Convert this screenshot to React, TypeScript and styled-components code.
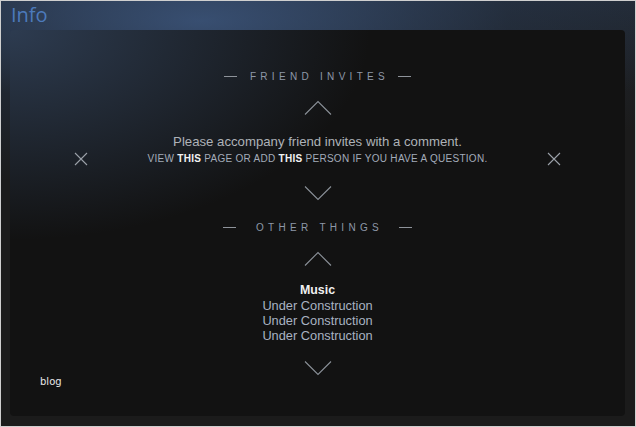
import React from "react";
import styled, { createGlobalStyle } from "styled-components";

const Global = createGlobalStyle`
  html, body { margin: 0; padding: 0; background: #1a1a1a; }
  * { box-sizing: border-box; }
`;

const Frame = styled.div`
  width: 636px;
  height: 427px;
  border: 1px solid #cfcfcf;
  background:
    radial-gradient(ellipse 560px 170px at 200px 20px, rgba(64, 92, 135, 0.75), rgba(40, 55, 78, 0.4) 55%, rgba(26, 26, 26, 0) 100%),
    linear-gradient(180deg, #222a35 0px, #1b1b1b 90px);
  display: flex;
  flex-direction: column;
  overflow: hidden;
`;

const Title = styled.h1`
  margin: 0;
  height: 29px;
  padding: 0 0 0 10px;
  font-family: "Open Sans", "Liberation Sans", sans-serif;
  font-weight: 400;
  font-size: 20px;
  line-height: 28px;
  color: #4c7abb;
`;

const Panel = styled.div`
  margin: 0 10px 0 9px;
  height: 386px;
  border-radius: 4px;
  background:
    radial-gradient(ellipse 360px 210px at 0px 0px, rgba(52, 70, 96, 0.8), rgba(18, 18, 18, 0) 100%),
    #121212;
  display: flex;
  flex-direction: column;
  align-items: center;
  padding-top: 39px;
`;

const SectionHeader = styled.div<{ $gap: number; $mt?: number }>`
  display: flex;
  align-items: center;
  gap: ${(p) => p.$gap}px;
  height: 14px;
  margin-top: ${(p) => p.$mt ?? 0}px;
  font-family: "Liberation Sans", Arial, sans-serif;
  font-size: 10px;
  letter-spacing: 4.3px;
  color: #8e98a8;
  text-transform: uppercase;
`;

const Dash = styled.span`
  width: 13px;
  height: 1px;
  background: #8e939a;
`;

const HeaderText = styled.span`
  margin-right: -4px;
`;

const Chevron = styled.svg<{ $mt: number }>`
  display: block;
  margin-top: ${(p) => p.$mt}px;
  flex: none;
`;

const InviteRow = styled.div`
  align-self: stretch;
  display: flex;
  align-items: flex-end;
  justify-content: space-between;
  padding: 0 64px;
  margin-top: 18px;
`;

const Close = styled.svg`
  display: block;
  margin-bottom: 0px;
`;

const InviteText = styled.div`
  display: flex;
  flex-direction: column;
  align-items: center;
  font-family: "Liberation Sans", Arial, sans-serif;
`;

const Lead = styled.div`
  font-size: 13.2px;
  line-height: 17px;
  color: #aeb2b8;
`;

const Small = styled.div`
  margin-top: 2px;
  font-size: 10px;
  line-height: 14px;
  letter-spacing: 0.28px;
  color: #a3acba;
  text-transform: uppercase;
  b { color: #f2f2f2; font-weight: 700; }
`;

const List = styled.div`
  margin-top: 17px;
  display: flex;
  flex-direction: column;
  align-items: center;
  font-family: "Liberation Sans", Arial, sans-serif;
`;

const ListHead = styled.div`
  font-size: 12.4px;
  font-weight: 700;
  line-height: 15px;
  color: #f0f0f0;
`;

const ListItem = styled.div`
  font-size: 12.8px;
  line-height: 15px;
  color: #a9b2c2;
`;

const Blog = styled.div`
  align-self: flex-start;
  margin-left: 30px;
  margin-top: 0px;
  font-family: "DejaVu Sans", Verdana, sans-serif;
  font-size: 10px;
  line-height: 12px;
  color: #e6e6e6;
`;

const Up = ({ mt }: { mt: number }) => (
  <Chevron $mt={mt} width="28" height="15" viewBox="0 0 28 15">
    <polyline points="1,14.5 14,1.5 27,14.5" fill="none" stroke="#8a9098" strokeWidth="1.1" />
  </Chevron>
);

const Down = ({ mt }: { mt: number }) => (
  <Chevron $mt={mt} width="28" height="15" viewBox="0 0 28 15">
    <polyline points="1,0.5 14,13.5 27,0.5" fill="none" stroke="#8a9098" strokeWidth="1.1" />
  </Chevron>
);

const X = () => (
  <Close width="14" height="14" viewBox="0 0 14 14">
    <path d="M1 1 L13 13 M13 1 L1 13" stroke="#9ba1a9" strokeWidth="1.1" fill="none" />
  </Close>
);

export default function App() {
  return (
    <>
      <Global />
      <Frame>
        <Title>Info</Title>
        <Panel>
          <SectionHeader $gap={13}>
            <Dash />
            <HeaderText>Friend Invites</HeaderText>
            <Dash />
          </SectionHeader>
          <Up mt={17} />
          <InviteRow>
            <X />
            <InviteText>
              <Lead>Please accompany friend invites with a comment.</Lead>
              <Small>
                View <b>this</b> page or add <b>this</b> person if you have a question.
              </Small>
            </InviteText>
            <X />
          </InviteRow>
          <Down mt={20} />
          <SectionHeader $gap={20} $mt={19}>
            <Dash />
            <HeaderText>Other Things</HeaderText>
            <Dash />
          </SectionHeader>
          <Up mt={17} />
          <List>
            <ListHead>Music</ListHead>
            <ListItem>Under Construction</ListItem>
            <ListItem>Under Construction</ListItem>
            <ListItem>Under Construction</ListItem>
          </List>
          <Down mt={18} />
          <Blog>blog</Blog>
        </Panel>
      </Frame>
    </>
  );
}
